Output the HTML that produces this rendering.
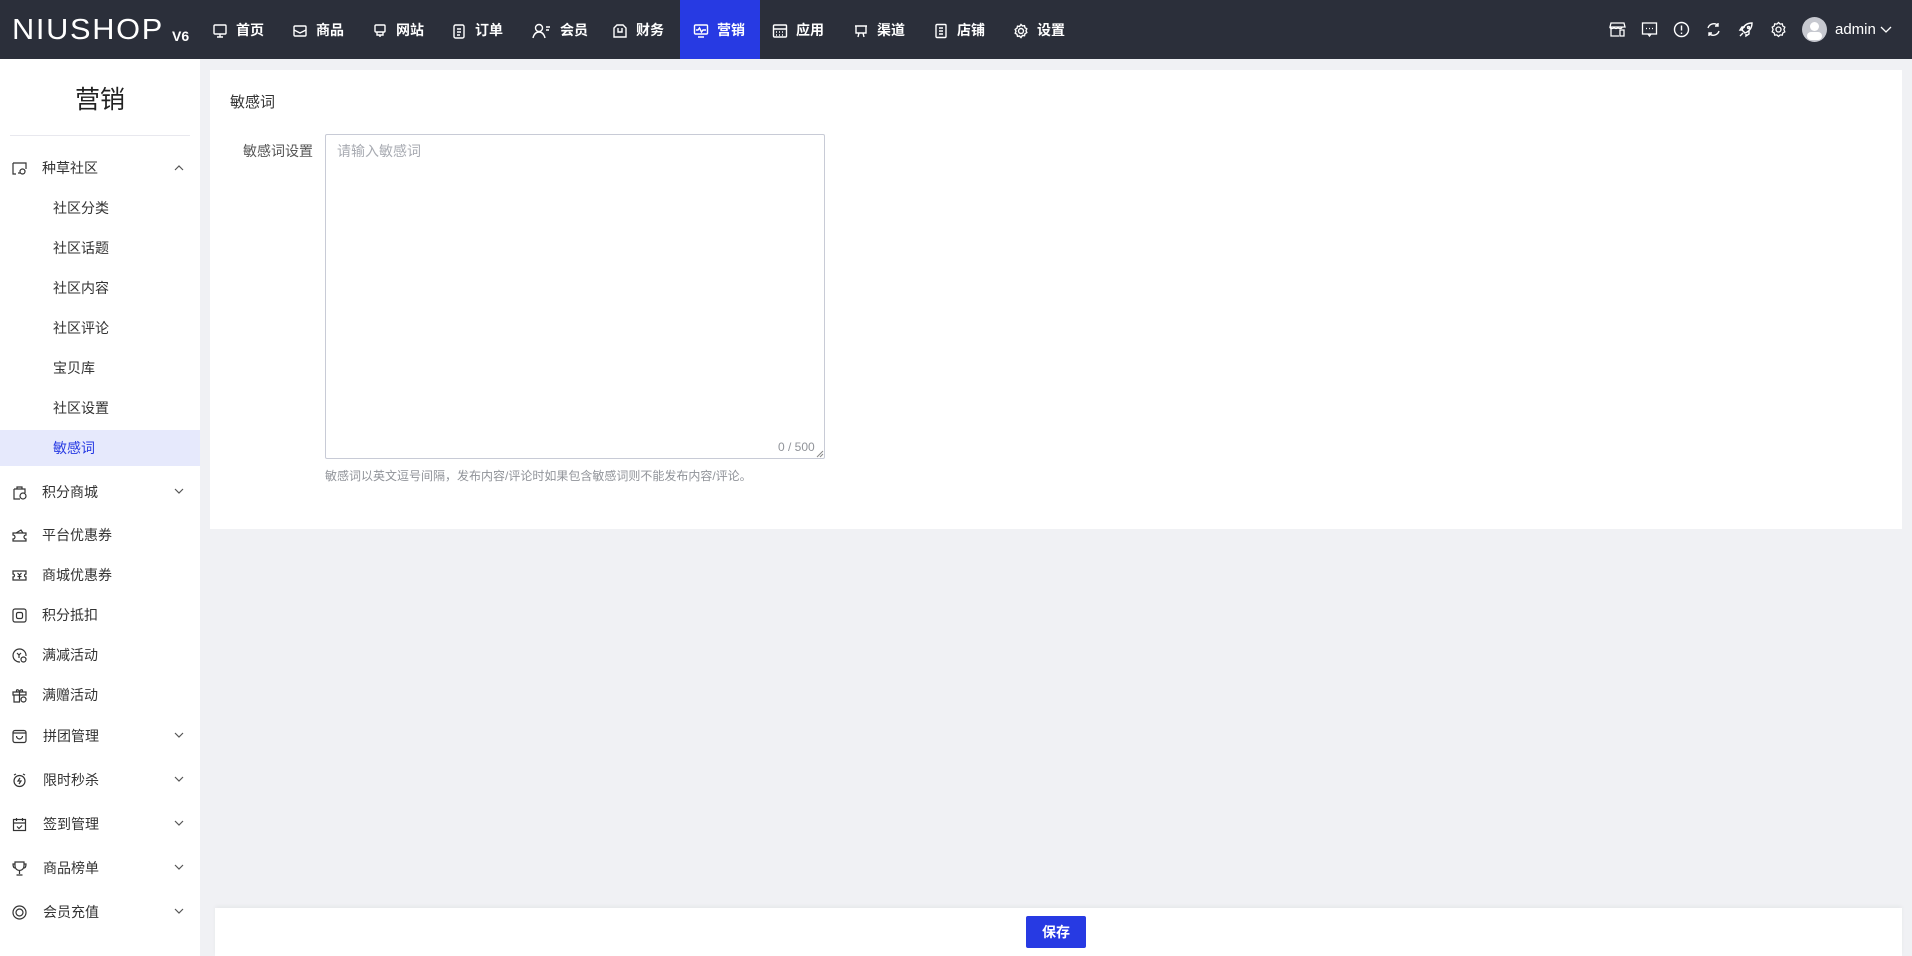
<!DOCTYPE html>
<html><head><meta charset="utf-8"><style>
*{margin:0;padding:0;box-sizing:border-box}
body{width:1912px;height:956px;overflow:hidden;background:#f0f1f4;font-family:"Liberation Sans","Noto Sans CJK SC",sans-serif;position:relative;color:#333}
.hd{position:absolute;left:0;top:0;width:1912px;height:59px;background:#2b2f3a}
.logo{position:absolute;left:12px;top:14px;color:#fff;font-size:29px;font-weight:normal;letter-spacing:1.6px;font-family:"Liberation Sans",sans-serif;transform:scaleX(1.06);transform-origin:left}
.v6{position:absolute;left:172px;top:28px;color:#fff;font-size:14px;font-weight:bold}
.nav{position:absolute;top:1px;height:59px;line-height:59px;color:#fff;font-size:14px;font-weight:bold;display:flex;align-items:center}
.nav svg{margin-right:8px}
.act{position:absolute;left:680px;top:0;width:80px;height:59px;background:#273ae3}
.ic{position:absolute;top:21px}
.sb{position:absolute;left:0;top:59px;width:200px;height:897px;background:#fff}
.ttl{position:absolute;left:0;width:200px;top:80px;text-align:center;font-size:25px;color:#222}
.dv{position:absolute;left:10px;top:135px;width:180px;height:1px;background:#e8e8ee}
.it{position:absolute;left:0;width:200px;height:40px;line-height:40px;font-size:14px;color:#333}
.it .t{position:absolute;left:42px}
.it .s{position:absolute;left:53px}
.it svg.i{position:absolute;left:12px;top:13px}
.it .ch{position:absolute;left:174px;top:16px}
.card{position:absolute;left:210px;top:70px;width:1692px;height:459px;background:#fff}
.ta{position:absolute;left:325px;top:134px;width:500px;height:325px;border:1px solid #c8cbd6;border-radius:2px}
.bb{position:absolute;left:215px;top:908px;width:1687px;height:48px;background:#fff;box-shadow:0 -2px 4px rgba(0,0,0,.04)}
.btn{position:absolute;left:1026px;top:916px;width:60px;height:32px;background:#273ae3;border-radius:2px;color:#fff;font-size:14px;font-weight:bold;text-align:center;line-height:32px}
</style></head><body>
<div class="hd"></div>
<div class="logo">NIUSHOP</div><div class="v6">V6</div>
<div class="act"></div>
<div class="nav" style="left:212px"><svg width="16" height="16" viewBox="0 0 16 16" fill="none" stroke="#fff" stroke-width="1.4"><rect x="2" y="2" width="12" height="9" rx="1"/><path d="M8 11v3M5 14h6"/></svg>首页</div>
<div class="nav" style="left:292px"><svg width="16" height="16" viewBox="0 0 16 16" fill="none" stroke="#fff" stroke-width="1.4"><rect x="2" y="3" width="12" height="10" rx="1"/><path d="M2 7l6 3 6-3"/></svg>商品</div>
<div class="nav" style="left:372px"><svg width="16" height="16" viewBox="0 0 16 16" fill="none" stroke="#fff" stroke-width="1.4"><rect x="3" y="2" width="10" height="7" rx="1"/><path d="M5 9v3h6V9M8 12v2"/></svg>网站</div>
<div class="nav" style="left:451px"><svg width="16" height="16" viewBox="0 0 16 16" fill="none" stroke="#fff" stroke-width="1.4"><rect x="3" y="2" width="10" height="13" rx="1.5"/><path d="M6 6h4M6 9h4M6 12h3"/></svg>订单</div>
<div class="nav" style="left:532px"><svg width="20" height="16" viewBox="0 0 20 16" fill="none" stroke="#fff" stroke-width="1.4"><circle cx="7" cy="5" r="3.5"/><path d="M1 15c1-4 3-6 6-6s5 2 6 6M14 4h4M14 7h3"/></svg>会员</div>
<div class="nav" style="left:612px"><svg width="16" height="16" viewBox="0 0 16 16" fill="none" stroke="#fff" stroke-width="1.4"><path d="M2 5l3-3h6l3 3v9H2z"/><path d="M6 5v4h4V5"/></svg>财务</div>
<div class="nav" style="left:693px"><svg width="16" height="16" viewBox="0 0 16 16" fill="none" stroke="#fff" stroke-width="1.4"><rect x="1.5" y="2" width="13" height="9" rx="1"/><path d="M3 7h2l1.5-2 2 4 1.5-2h3M5 14h6"/></svg>营销</div>
<div class="nav" style="left:772px"><svg width="16" height="16" viewBox="0 0 16 16" fill="none" stroke="#fff" stroke-width="1.4"><rect x="1.5" y="2" width="13" height="12" rx="1"/><path d="M1.5 6h13M4 9h1M7 9h1M10 9h1M4 12h1M7 12h1M10 12h1"/></svg>应用</div>
<div class="nav" style="left:853px"><svg width="16" height="16" viewBox="0 0 16 16" fill="none" stroke="#fff" stroke-width="1.4"><path d="M2 3h12M3 3v7h10V3M6 10l-1 4M10 10l1 4"/></svg>渠道</div>
<div class="nav" style="left:933px"><svg width="16" height="16" viewBox="0 0 16 16" fill="none" stroke="#fff" stroke-width="1.4"><rect x="3" y="1.5" width="10" height="13" rx="1"/><path d="M6 5h4M6 8h4M6 11h4"/></svg>店铺</div>
<div class="nav" style="left:1013px"><svg width="16" height="16" viewBox="0 0 16 16" fill="none" stroke="#fff" stroke-width="1.4"><circle cx="8" cy="8" r="2.5"/><path d="M8 1.5l1.5 1.5 2-.3.5 2 1.8 1.1-.8 1.9.8 1.9-1.8 1.1-.5 2-2-.3L8 14.5 6.5 13l-2 .3-.5-2-1.8-1.1.8-1.9-.8-1.9L4 5.2l.5-2 2 .3z"/></svg>设置</div>

<svg class="ic" style="left:1609px" width="17" height="17" viewBox="0 0 17 17" fill="none" stroke="#fff" stroke-width="1.3"><path d="M2 2h13l1 4H1zM2 6v9h8M11 9h4v6h-4z"/><path d="M1 6c0 2 4 2 4 0 0 2 4 2 4 0 0 2 4 2 4 0"/></svg>
<svg class="ic" style="left:1641px" width="17" height="17" viewBox="0 0 17 17" fill="none" stroke="#fff" stroke-width="1.3"><rect x="1.5" y="2" width="14" height="11"/><path d="M7 13l1.5 2 1.5-2M5 7.5h1M8 7.5h1M11 7.5h1"/></svg>
<svg class="ic" style="left:1673px" width="17" height="17" viewBox="0 0 17 17" fill="none" stroke="#fff" stroke-width="1.4"><circle cx="8.5" cy="8.5" r="7"/><path d="M8.5 4.5v5M8.5 11.5v1.5"/></svg>
<svg class="ic" style="left:1705px" width="17" height="17" viewBox="0 0 17 17" fill="none" stroke="#fff" stroke-width="1.4"><path d="M3 7a6 6 0 0 1 10-2.5M14 10a6 6 0 0 1-10 2.5M13 2v3h-3M4 15v-3h3"/></svg>
<svg class="ic" style="left:1738px" width="17" height="17" viewBox="0 0 17 17" fill="none" stroke="#fff" stroke-width="1.4"><path d="M6 11l-2-2c2-5 6-7 10-7 0 4-2 8-7 10zM4 9l-2 0 2-3h3M8 13v2l3-2v-3M5 12l-3 3"/><circle cx="10.5" cy="6.5" r="1"/></svg>
<svg class="ic" style="left:1770px" width="17" height="17" viewBox="0 0 17 17" fill="none" stroke="#fff" stroke-width="1.3"><circle cx="8.5" cy="8.5" r="2.5"/><path d="M8.5 1.5l1.6 1.6 2.2-.3.5 2.2 2 1.2-.9 2.3.9 2.3-2 1.2-.5 2.2-2.2-.3-1.6 1.6-1.6-1.6-2.2.3-.5-2.2-2-1.2.9-2.3-.9-2.3 2-1.2.5-2.2 2.2.3z"/></svg>
<div style="position:absolute;left:1802px;top:17px;width:25px;height:25px;border-radius:50%;background:#c7c9d0;overflow:hidden"><div style="position:absolute;left:8px;top:5px;width:9px;height:9px;border-radius:50%;background:#fff"></div><div style="position:absolute;left:5px;top:15px;width:15px;height:8px;border-radius:4px;background:#fff"></div></div>
<div style="position:absolute;left:1835px;top:21px;color:#fff;font-size:15px">admin</div>
<svg style="position:absolute;left:1880px;top:26px" width="12" height="8" viewBox="0 0 12 8" fill="none" stroke="#fff" stroke-width="1.3"><path d="M1 1l5 5 5-5"/></svg>

<div class="sb"></div>
<div class="ttl">营销</div>
<div class="dv"></div>
<div class="it" style="top:148px"><svg class="i" width="15" height="15" viewBox="0 0 15 15" fill="none" stroke="#333" stroke-width="1.2"><path d="M1 2h13v6M1 2v11h3M6 12h2"/><circle cx="10.5" cy="10.5" r="2.5"/></svg><span class="t">种草社区</span><svg class="ch" width="10" height="7" viewBox="0 0 10 7" fill="none" stroke="#555" stroke-width="1.2"><path d="M1 6l4-4 4 4"/></svg></div>
<div class="it" style="top:188px"><span class="s">社区分类</span></div>
<div class="it" style="top:228px"><span class="s">社区话题</span></div>
<div class="it" style="top:268px"><span class="s">社区内容</span></div>
<div class="it" style="top:308px"><span class="s">社区评论</span></div>
<div class="it" style="top:348px"><span class="s">宝贝库</span></div>
<div class="it" style="top:388px"><span class="s">社区设置</span></div>
<div class="it" style="top:430px;height:36px;line-height:36px;background:#e6e9fc;color:#273ae3"><span class="s">敏感词</span></div>
<div class="it" style="top:472px"><svg class="i" width="15" height="15" viewBox="0 0 15 15" fill="none" stroke="#333" stroke-width="1.2"><path d="M5 4V2h5v2M2 4h11v4M2 4v10h6"/><circle cx="11" cy="11" r="3"/></svg><span class="t">积分商城</span><svg class="ch" width="10" height="7" viewBox="0 0 10 7" fill="none" stroke="#555" stroke-width="1.2"><path d="M1 1l4 4 4-4"/></svg></div>
<div class="it" style="top:515px"><svg class="i" width="15" height="15" viewBox="0 0 15 15" fill="none" stroke="#333" stroke-width="1.2"><path d="M1 5h13v2a2 2 0 0 0 0 4v2H1v-2a2 2 0 0 0 0-4zM4 5l5-3 2 3"/></svg><span class="t">平台优惠券</span></div>
<div class="it" style="top:555px"><svg class="i" width="15" height="15" viewBox="0 0 15 15" fill="none" stroke="#333" stroke-width="1.2"><path d="M1 3h13v3a1.5 1.5 0 0 0 0 3v3H1V9a1.5 1.5 0 0 0 0-3zM5.5 5l2 2 2-2M7.5 7v4M5.5 8.5h4"/></svg><span class="t">商城优惠券</span></div>
<div class="it" style="top:595px"><svg class="i" width="15" height="15" viewBox="0 0 15 15" fill="none" stroke="#333" stroke-width="1.2"><rect x="1" y="1" width="13" height="13" rx="2"/><rect x="4.5" y="4.5" width="6" height="6" rx="1.5"/></svg><span class="t">积分抵扣</span></div>
<div class="it" style="top:635px"><svg class="i" width="15" height="15" viewBox="0 0 15 15" fill="none" stroke="#333" stroke-width="1.2"><path d="M8 14A6.5 6.5 0 1 1 14 8"/><circle cx="11.5" cy="11.5" r="2.5"/><path d="M5 5l2 2 2-2M7 7v3"/></svg><span class="t">满减活动</span></div>
<div class="it" style="top:675px"><svg class="i" width="15" height="15" viewBox="0 0 15 15" fill="none" stroke="#333" stroke-width="1.2"><path d="M1 4h13v3H1zM2 7v7h6M7.5 4v10M5 4c-2-3 2-3 2.5 0M10 4c2-3-2-3-2.5 0"/><circle cx="11.5" cy="11.5" r="2.5"/></svg><span class="t">满赠活动</span></div>
<div class="it" style="top:716px"><svg class="i" width="15" height="15" viewBox="0 0 15 15" fill="none" stroke="#333" stroke-width="1.2"><rect x="1" y="1.5" width="13" height="12" rx="2"/><path d="M1 4h13M4.5 7a3 3 0 0 0 6 0"/></svg><span class="t" style="left:43px">拼团管理</span><svg class="ch" width="10" height="7" viewBox="0 0 10 7" fill="none" stroke="#555" stroke-width="1.2"><path d="M1 1l4 4 4-4"/></svg></div>
<div class="it" style="top:760px"><svg class="i" width="15" height="15" viewBox="0 0 15 15" fill="none" stroke="#333" stroke-width="1.2"><circle cx="7.5" cy="8" r="5.5"/><path d="M2 2l2-1M13 2l-2-1M8 5l-2 3h3l-2 3"/></svg><span class="t" style="left:43px">限时秒杀</span><svg class="ch" width="10" height="7" viewBox="0 0 10 7" fill="none" stroke="#555" stroke-width="1.2"><path d="M1 1l4 4 4-4"/></svg></div>
<div class="it" style="top:804px"><svg class="i" width="15" height="15" viewBox="0 0 15 15" fill="none" stroke="#333" stroke-width="1.2"><rect x="1.5" y="2.5" width="12" height="11"/><path d="M1.5 6h12M4.5 1v3M10.5 1v3M5 9.5l2 2 3-3"/></svg><span class="t" style="left:43px">签到管理</span><svg class="ch" width="10" height="7" viewBox="0 0 10 7" fill="none" stroke="#555" stroke-width="1.2"><path d="M1 1l4 4 4-4"/></svg></div>
<div class="it" style="top:848px"><svg class="i" width="15" height="15" viewBox="0 0 15 15" fill="none" stroke="#333" stroke-width="1.2"><path d="M3 1h9v4a4.5 4.5 0 0 1-9 0zM3 3H1c0 3 1 4 2 4M12 3h2c0 3-1 4-2 4M7.5 9.5V13M4.5 14h6"/></svg><span class="t" style="left:43px">商品榜单</span><svg class="ch" width="10" height="7" viewBox="0 0 10 7" fill="none" stroke="#555" stroke-width="1.2"><path d="M1 1l4 4 4-4"/></svg></div>
<div class="it" style="top:892px"><svg class="i" width="15" height="15" viewBox="0 0 15 15" fill="none" stroke="#333" stroke-width="1.2"><circle cx="7.5" cy="7.5" r="6.5"/><circle cx="7.5" cy="7.5" r="3.5"/></svg><span class="t" style="left:43px">会员充值</span><svg class="ch" width="10" height="7" viewBox="0 0 10 7" fill="none" stroke="#555" stroke-width="1.2"><path d="M1 1l4 4 4-4"/></svg></div>

<div class="card"></div>
<div style="position:absolute;left:230px;top:91px;font-size:15px;color:#333">敏感词</div>
<div style="position:absolute;left:243px;top:141px;font-size:14px;color:#555">敏感词设置</div>
<div class="ta"></div>
<div style="position:absolute;left:337px;top:141px;font-size:14px;color:#a8abb2">请输入敏感词</div>
<div style="position:absolute;left:778px;top:440px;font-size:12px;color:#909399">0 / 500</div>
<svg style="position:absolute;left:816px;top:450px" width="8" height="8" viewBox="0 0 8 8" stroke="#888" stroke-width="1"><path d="M1 7L7 1M4 7L7 4"/></svg>
<div style="position:absolute;left:325px;top:467px;font-size:12px;color:#909399">敏感词以英文逗号间隔，发布内容/评论时如果包含敏感词则不能发布内容/评论。</div>

<div class="bb"></div>
<div class="btn">保存</div>
</body></html>
